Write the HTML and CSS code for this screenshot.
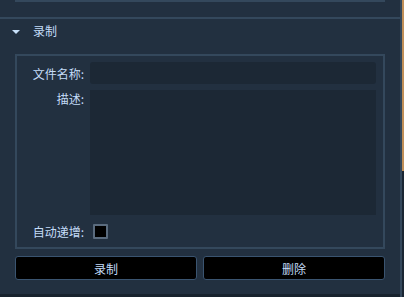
FILE: index.html
```html
<!DOCTYPE html>
<html>
<head>
<meta charset="utf-8">
<link rel="stylesheet" href="styles.css">
</head>
<body>
<div class="window">
  <div class="panel">
    <div class="prev-box"></div>
    <div class="separator"></div>
    <div class="section-header">
      <span class="arrow"></span>
      <span class="section-title">录制</span>
    </div>
    <div class="group">
      <div class="field">
        <label class="label">文件名称:</label>
        <div class="input"></div>
      </div>
      <div class="field field-top">
        <label class="label">描述:</label>
        <div class="textarea"></div>
      </div>
      <div class="field field-check">
        <label class="label">自动递增:</label>
        <span class="checkbox"></span>
      </div>
    </div>
    <div class="buttons">
      <button class="btn">录制</button>
      <button class="btn">删除</button>
    </div>
    <div class="spacer"></div>
    <div class="bottom-band"></div>
  </div>
  <div class="scrollbar">
    <div class="scroll-line"></div>
    <div class="scroll-track"><div class="scroll-thumb"></div></div>
  </div>
</div>
</body>
</html>
```

FILE: styles.css
```css
html, body {
  margin: 0;
  padding: 0;
  width: 404px;
  height: 297px;
  overflow: hidden;
  background: #223040;
  font-family: "Noto Sans CJK SC", "Liberation Sans", sans-serif;
  font-size: 12px;
  color: #c4dcf8;
}
.window {
  display: flex;
  width: 404px;
  height: 297px;
}
.panel {
  width: 400px;
  display: flex;
  flex-direction: column;
}
.prev-box {
  margin: 0 15px;
  height: 2px;
  background: #34485c;
}
.separator {
  margin-top: 15px;
  height: 2px;
  background: #34485c;
}
.section-header {
  height: 24px;
  display: flex;
  align-items: center;
  padding-left: 12px;
}
.arrow {
  width: 0;
  height: 0;
  border-left: 4px solid transparent;
  border-right: 4px solid transparent;
  border-top: 4px solid #c8e0fa;
  margin-right: 13px;
  margin-top: 1px;
}
.section-title {
  line-height: 16px;
}
.group {
  box-sizing: border-box;
  margin: 11px 15px 0 15px;
  border: 2px solid #34485c;
  height: 195px;
  padding: 6px 7px 0 0;
  display: flex;
  flex-direction: column;
  gap: 6px;
}
.field {
  display: flex;
  align-items: center;
}
.field-top {
  align-items: flex-start;
}
.field-check {
  margin-top: 2px;
}
.label {
  width: 67px;
  text-align: right;
  line-height: 17px;
  margin-right: 6px;
  white-space: nowrap;
}
.input {
  flex: 1;
  height: 22px;
  background: #1c2835;
  border-radius: 3px;
}
.textarea {
  flex: 1;
  height: 125px;
  background: #1c2835;
}
.checkbox {
  width: 11px;
  height: 11px;
  margin-left: 3px;
  background: #000;
  border: 2px solid #5a6b7e;
  border-radius: 1px;
}
.buttons {
  display: flex;
  gap: 6px;
  margin: 7px 15px 0 15px;
}
.btn {
  flex: 1;
  height: 24px;
  background: #000;
  border: 1px solid #3a5470;
  border-radius: 3px;
  color: #c4dcf8;
  font-family: "Noto Sans CJK SC", "Liberation Sans", sans-serif;
  font-size: 12px;
  padding: 0;
}
.spacer {
  flex: 1;
}
.bottom-band {
  height: 3px;
  background: #18222d;
}
.scrollbar {
  width: 4px;
  display: flex;
}
.scroll-line {
  width: 2px;
  background: #34485c;
}
.scroll-track {
  width: 2px;
  background: #1a2633;
}
.scroll-thumb {
  height: 171px;
  background: #c08f58;
}
```
